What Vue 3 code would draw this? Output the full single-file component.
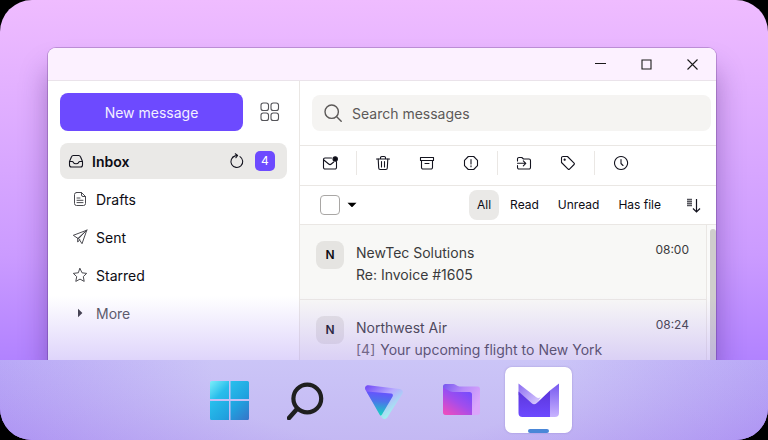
<script setup>
import { ref } from 'vue'

const query = ref('')
const allChecked = ref(false)
const activeFilter = ref('All')

const windowButtons = [
  { label: 'Minimize', path: 'M3 7.500h11' },
  { label: 'Maximize', path: 'M4 4h9v9H4z' },
  { label: 'Close', path: 'M3.500 3.500l10 10M13.500 3.500l-10 10' },
]

const folders = [
  {
    name: 'Drafts',
    paths: ['M4.500 1.500h5l4 4v7a2 2 0 0 1-2 2h-7a2 2 0 0 1-2-2v-9a2 2 0 0 1 2-2z', 'M9.500 1.500v2.500a1.500 1.500 0 0 0 1.500 1.500h2.500', 'M5 7h3M5 9.300h6M5 11.600h6'],
  },
  {
    name: 'Sent',
    paths: ['M14.800 1.200L1.300 6.300l4.400 3zM14.800 1.200L10 14.700 6.900 9.900z', 'M5.700 9.300v3.800l1.900-2.200M14.500 1.500L6.300 9.300'],
  },
  {
    name: 'Starred',
    paths: ['M8 1.500l2 4.300 4.700.6-3.400 3.200.9 4.800L8 12.100l-4.200 2.300.9-4.800-3.400-3.200 4.700-.6z'],
  },
]

const toolGroups = [
  [
    { label: 'Mark as unread', paths: ['M9.500 3H3a1.500 1.500 0 0 0-1.500 1.500v8A1.500 1.500 0 0 0 3 14h10a1.500 1.500 0 0 0 1.500-1.500V6.500', 'M1.800 5l4.900 4a2 2 0 0 0 2.600 0l2.400-2'], dot: true },
  ],
  [
    { label: 'Delete', paths: ['M1.500 4h13M5.500 4V2.800a1.300 1.300 0 0 1 1.300-1.300h2.400a1.300 1.300 0 0 1 1.300 1.300V4', 'M3.200 4l.5 9a1.500 1.500 0 0 0 1.500 1.500h5.600a1.500 1.500 0 0 0 1.500-1.500l.5-9M6.500 6.500v5.500M9.500 6.500v5.500'] },
    { label: 'Archive', paths: ['M1.500 2.500h13v3h-13z', 'M2.500 5.500v7A1.500 1.500 0 0 0 4 14h8a1.500 1.500 0 0 0 1.500-1.500v-7M6 8.500h4'] },
    { label: 'Report spam', paths: ['M5.300 1.500h5.400l3.800 3.800v5.400l-3.800 3.800H5.300l-3.800-3.800V5.300z', 'M8 4.500v4.500M8 10.700v1'] },
  ],
  [
    { label: 'Move to folder', paths: ['M1.500 6V4A1.500 1.500 0 0 1 3 2.500h2.800l1.700 1.500H13a1.500 1.500 0 0 1 1.500 1.500V12.500A1.500 1.500 0 0 1 13 14H3a1.500 1.500 0 0 1-1.500-1.500v-2', 'M1.500 8.300h8M7.300 5.800l2.500 2.500-2.500 2.500'] },
    { label: 'Add label', paths: ['M1.500 3a1.500 1.500 0 0 1 1.500-1.500h4.500l6.600 6.600a1 1 0 0 1 0 1.400l-4.600 4.600a1 1 0 0 1-1.400 0L1.500 7.500z', 'M4.600 4.100a.6.6 0 1 0 .1 0z'] },
  ],
  [
    { label: 'Snooze', paths: ['M8 1.500a6.500 6.500 0 1 0 .1 0z', 'M8 4.500V8.500l2 2'] },
  ],
]

const filters = ['All', 'Read', 'Unread', 'Has file']

const messages = [
  { sender: 'NewTec Solutions', subject: 'Re: Invoice #1605', time: '08:00' },
  { sender: 'Northwest Air', subject: 'Your upcoming flight to New York', count: 4, time: '08:24' },
]
</script>

<template>
  <div class="screen">
    <div class="desktop">
      <div class="window">
        <header class="titlebar">
          <button v-for="b in windowButtons" :key="b.label" type="button" :aria-label="b.label">
            <svg viewBox="0 0 17 17" width="17" height="17"><path :d="b.path" /></svg>
          </button>
        </header>

        <div class="body">
          <aside class="sidebar">
            <div class="compose">
              <button class="new-message" type="button">New message</button>
              <button class="apps" type="button" aria-label="Apps">
                <svg viewBox="0 0 20 20" width="20" height="20">
                  <rect x="1" y="1" width="7.500" height="7.500" rx="2.300" />
                  <rect x="11" y="1" width="7.500" height="7.500" rx="2.300" />
                  <rect x="1" y="11" width="7.500" height="7.500" rx="2.300" />
                  <rect x="11" y="11" width="7.500" height="7.500" rx="2.300" />
                </svg>
              </button>
            </div>

            <nav class="folders">
              <div class="folder active">
                <a href="#inbox">
                  <svg class="line" viewBox="0 0 16 16" width="16" height="16">
                    <path d="M1.500 8.500l2-4.700a2 2 0 0 1 1.900-1.300h5.200a2 2 0 0 1 1.900 1.300l2 4.700v3.500a2 2 0 0 1-2 2h-9a2 2 0 0 1-2-2z" />
                    <path d="M1.500 8.500h2.700c.8 0 1 .6 1.300 1.200.4.800 1 1 2.500 1s2.100-.2 2.500-1c.3-.6.500-1.200 1.300-1.200h2.700" />
                  </svg>
                  Inbox
                </a>
                <button class="refresh" type="button" aria-label="Refresh">
                  <svg class="line" viewBox="0 0 16 16" width="16" height="16">
                    <path d="M11 3.600a5.900 5.900 0 1 1-4.800-.7l2-.4" /><path d="M6.300.8l2.300 1.700L6.900 4.700" />
                  </svg>
                </button>
                <span class="badge">4</span>
              </div>
              <a v-for="f in folders" :key="f.name" class="folder" :href="'#' + f.name.toLowerCase()">
                <svg class="line soft" viewBox="0 0 16 16" width="16" height="16">
                  <path v-for="p in f.paths" :key="p" :d="p" />
                </svg>
                {{ f.name }}
              </a>
              <button class="folder more" type="button">
                <svg viewBox="0 0 16 16" width="16" height="16"><path d="M6 3.800L10.400 8 6 12.200z" /></svg>
                More
              </button>
            </nav>
          </aside>

          <main class="mail">
            <div class="search-row">
              <label class="search">
                <svg viewBox="0 0 18 18" width="18" height="18"><circle cx="7.700" cy="7.700" r="6.700" /><path d="M12.500 12.500l4.700 4.700" /></svg>
                <input v-model="query" type="search" placeholder="Search messages" aria-label="Search messages" />
              </label>
            </div>

            <div class="toolbar">
              <div v-for="(group, i) in toolGroups" :key="i" class="tools">
                <button v-for="t in group" :key="t.label" type="button" :aria-label="t.label">
                  <svg class="line" viewBox="0 0 16 16" width="16" height="16">
                    <path v-for="p in t.paths" :key="p" :d="p" />
                    <circle v-if="t.dot" class="dot" cx="13.200" cy="4" r="2.200" />
                  </svg>
                </button>
              </div>
            </div>

            <div class="filters">
              <input v-model="allChecked" type="checkbox" aria-label="Select all" />
              <button class="caret" type="button" aria-label="Selection options">
                <svg viewBox="0 0 10 6" width="10" height="6"><path d="M.5.700h9L5.600 4.700a.8.8 0 0 1-1.200 0z" /></svg>
              </button>
              <div class="tabs">
                <button v-for="f in filters" :key="f" type="button" :class="{ on: f === activeFilter }" @click="activeFilter = f">{{ f }}</button>
              </div>
              <button class="sort" type="button" aria-label="Sort">
                <svg viewBox="0 0 16 16" width="16" height="16">
                  <path class="rows" d="M2 2.500h5M2 4.500h5M2 6.500h5M2 8.500h5" />
                  <path d="M11.500 2v12.500M8 11.500l3.500 3.500 3.500-3.500" />
                </svg>
              </button>
            </div>

            <div class="list">
              <ul>
                <li v-for="m in messages" :key="m.sender">
                  <span class="avatar">{{ m.sender[0] }}</span>
                  <div class="text">
                    <div>{{ m.sender }}</div>
                    <div><span v-if="m.count" class="count">[{{ m.count }}]</span>{{ m.subject }}</div>
                  </div>
                  <time>{{ m.time }}</time>
                </li>
              </ul>
              <div class="scroll"><div class="thumb"></div></div>
            </div>
          </main>
        </div>
        <div class="fade"></div>
      </div>
    </div>

    <footer class="taskbar">
      <button type="button" aria-label="Start">
        <svg viewBox="0 0 40 40" width="40" height="40">
          <defs>
            <linearGradient id="win" x1="0" y1="0" x2="1" y2="1">
              <stop offset="0" stop-color="#7ceefa" /><stop offset=".3" stop-color="#27bdeb" />
              <stop offset=".65" stop-color="#20a2df" /><stop offset="1" stop-color="#3674c8" />
            </linearGradient>
          </defs>
          <path fill="url(#win)" d="M1.500 1h17.500v18H0V2.500A1.500 1.500 0 0 1 1.500 1zM20.500 1H37.500a1.500 1.500 0 0 1 1.500 1.500V19h-18.500zM0 21h19v19H1.500a1.500 1.500 0 0 1-1.500-1.500zM20.500 21h18.500v17.500A1.500 1.500 0 0 1 37.500 40H20.500z" />
        </svg>
      </button>
      <button type="button" aria-label="Search">
        <svg viewBox="0 0 40 40" width="40" height="40">
          <circle cx="20.300" cy="18.500" r="13.900" fill="none" stroke="#1f1f1f" stroke-width="4.200" />
          <path d="M10 29l-8 9" fill="none" stroke="#1f1f1f" stroke-width="4.500" stroke-linecap="round" />
        </svg>
      </button>
      <button type="button" aria-label="VPN">
        <svg viewBox="0 0 40 40" width="40" height="40">
          <defs>
            <linearGradient id="vpnBack" x1=".1" y1="0" x2=".8" y2=".8">
              <stop offset="0" stop-color="#7650f7" /><stop offset=".5" stop-color="#b8aaff" /><stop offset="1" stop-color="#a0f6ed" />
            </linearGradient>
            <linearGradient id="vpnFront" x1=".5" y1="0" x2=".4" y2="1">
              <stop offset="0" stop-color="#6851ff" /><stop offset=".4" stop-color="#4d73eb" /><stop offset="1" stop-color="#10d9bd" />
            </linearGradient>
          </defs>
          <path fill="url(#vpnBack)" d="M4.500 5.200l31 3.700c3 .4 4.200 2.800 2.700 5L23.500 37c-1.600 2.700-4.700 2.500-6 0L1.700 10.300C.2 7.500 1.500 4.900 4.500 5.200z" />
          <path fill="url(#vpnFront)" d="M2.500 11.500l24.500 2c1.700.1 2.500 1.400 1.600 2.900L18 34.500c-.8 1.300-1.600 1.400-2.300.2z" />
        </svg>
      </button>
      <button type="button" aria-label="Drive">
        <svg viewBox="0 0 40 40" width="40" height="40">
          <defs>
            <linearGradient id="drvBack" x1="0" y1="0" x2="1" y2=".5">
              <stop offset="0" stop-color="#7656ef" /><stop offset=".5" stop-color="#b78bf9" /><stop offset="1" stop-color="#dba6fb" />
            </linearGradient>
            <linearGradient id="drvFront" x1=".8" y1="0" x2=".1" y2="1">
              <stop offset="0" stop-color="#704cff" /><stop offset=".5" stop-color="#a34dec" /><stop offset="1" stop-color="#ef4dbd" />
            </linearGradient>
          </defs>
          <path fill="url(#drvBack)" d="M4.500 4h8c2.500 0 3.300 2.500 6 2.500h18A2.500 2.500 0 0 1 39 9v23.500a2.500 2.500 0 0 1-2.500 2.500H5a3 3 0 0 1-3-3V6.500A2.500 2.500 0 0 1 4.500 4z" />
          <path fill="url(#drvFront)" d="M2 7.500l6.500 3.600c1.500.9 2.500.9 4.500.9h15.500a2.500 2.500 0 0 1 2.500 2.500V35H5a3 3 0 0 1-3-3z" />
        </svg>
      </button>
      <button class="current" type="button" aria-label="Mail">
        <svg viewBox="0 0 42 42" width="42" height="42">
          <defs>
            <linearGradient id="mailSide" x1="0" y1="0" x2="0" y2="1">
              <stop offset="0" stop-color="#7658ef" /><stop offset="1" stop-color="#c8b3ff" />
            </linearGradient>
            <linearGradient id="mailFlap" x1="0" y1="0" x2="1" y2="1">
              <stop offset="0" stop-color="#8c6df0" /><stop offset="1" stop-color="#e1d5ff" />
            </linearGradient>
            <linearGradient id="mailFront" x1=".5" y1="0" x2=".5" y2="1">
              <stop offset="0" stop-color="#5c35db" /><stop offset="1" stop-color="#6d4aff" />
            </linearGradient>
          </defs>
          <path fill="url(#mailSide)" d="M32 11.500l9-7V34a4 4 0 0 1-4 4h-5z" />
          <path fill="url(#mailFlap)" d="M.500 4.500L18 18.100a4 4 0 0 0 4.800 0L17.500 27 .500 16z" />
          <path fill="url(#mailFront)" d="M.500 12.500L13.500 24a4 4 0 0 0 5.300 0L32 11.500V38H4.500a4 4 0 0 1-4-4z" />
        </svg>
      </button>
    </footer>
  </div>
</template>

<style>
body {
  margin: 0;
  background: #000;
}
</style>

<style scoped>
.screen {
  display: flex;
  flex-direction: column;
  height: 100vh;
  overflow: hidden;
  border-radius: 32px;
  font-family: Inter, "Liberation Sans", sans-serif;
  font-size: 14px;
  color: #0c0c14;
  background: linear-gradient(#efbcff, #cb9bff 58%, #b182ff 82%);
}
.screen * {
  box-sizing: border-box;
}
button {
  padding: 0;
  border: 0;
  background: none;
  font: inherit;
  color: inherit;
}
a {
  color: inherit;
  text-decoration: none;
}
svg {
  display: block;
  flex: none;
}
.line {
  fill: none;
  stroke: #14141f;
  stroke-width: 1.1;
  stroke-linejoin: round;
  stroke-linecap: round;
}
.line.soft {
  stroke: #4a4a50;
  stroke-width: 1;
}
.line .dot {
  fill: #0c0c14;
}

.desktop {
  display: flex;
  flex: 1;
  min-height: 0;
  overflow: hidden;
  padding: 48px 52px 0 48px;
}
.window {
  position: relative;
  display: flex;
  flex-direction: column;
  flex: 1;
  min-width: 0;
  border-radius: 8px 8px 0 0;
  background: #fff;
  box-shadow: 0 0 0 1px rgba(60, 20, 90, 0.24), 0 22px 28px rgba(50, 10, 90, 0.36);
}
.fade {
  position: absolute;
  inset: auto 0 0;
  height: 64px;
  background: linear-gradient(rgba(166, 138, 244, 0), rgba(166, 138, 244, 0.36));
  pointer-events: none;
}
.titlebar {
  display: flex;
  justify-content: flex-end;
  height: 33px;
  flex: none;
  padding-right: 1px;
  border-bottom: 1px solid #eae3ea;
  border-radius: 8px 8px 0 0;
  background: #fcf1ff;
}
.titlebar button {
  display: grid;
  place-items: center;
  width: 46px;
}
.titlebar svg {
  fill: none;
  stroke: #1a1a1a;
  stroke-width: 1.1;
}
.body {
  display: flex;
  flex: 1;
  min-height: 0;
}

.sidebar {
  flex: none;
  width: 252px;
  padding: 12px;
  border-right: 1px solid #eae7e4;
}
.compose {
  display: flex;
  align-items: center;
  gap: 17px;
}
.new-message {
  flex: 1;
  height: 38px;
  border-radius: 8px;
  background: #6d4aff;
  color: #f3efff;
}
.apps {
  margin-right: 7px;
}
.apps svg {
  fill: none;
  stroke: #55555a;
  stroke-width: 1.1;
}
.folders {
  display: flex;
  flex-direction: column;
  gap: 2px;
  margin-top: 12px;
}
.folder {
  display: flex;
  align-items: center;
  gap: 8px;
  height: 36px;
  padding: 0 12px;
}
.folder.active {
  padding: 0 12px 0 8px;
  border-radius: 8px;
  background: #eae9e7;
  font-weight: 600;
}
.folder.active a {
  display: flex;
  flex: 1;
  align-items: center;
  gap: 8px;
}
.badge {
  width: 20px;
  margin-left: 2px;
  border-radius: 5px;
  background: #6d4aff;
  color: #fff;
  font-size: 12px;
  font-weight: 400;
  line-height: 20px;
  text-align: center;
}
.more {
  color: #55555c;
}
.more svg {
  fill: #3c3c44;
}

.mail {
  display: flex;
  flex: 1;
  flex-direction: column;
  min-width: 0;
}
.search-row {
  padding: 14px 5px 14px 12px;
  border-bottom: 1px solid #eae7e4;
}
.search {
  display: flex;
  align-items: center;
  gap: 10px;
  height: 36px;
  padding: 0 12px;
  border-radius: 8px;
  background: #f5f4f2;
}
.search svg {
  fill: none;
  stroke: #5c5958;
  stroke-width: 1.4;
  stroke-linecap: round;
}
.search input {
  flex: 1;
  min-width: 0;
  padding: 0;
  border: 0;
  outline: 0;
  background: none;
  font: inherit;
  color: inherit;
}
.search input::placeholder {
  color: #5c5958;
  opacity: 1;
}
.toolbar {
  display: flex;
  align-items: center;
  flex: none;
  height: 40px;
  padding: 0 4px 5px;
  border-bottom: 1px solid #eae7e4;
}
.tools {
  display: flex;
  gap: 4px;
  padding: 0 6px;
}
.tools + .tools {
  border-left: 1px solid #eae7e4;
}
.tools button {
  display: grid;
  place-items: center;
  width: 40px;
  height: 24px;
}
.filters {
  display: flex;
  align-items: center;
  flex: none;
  height: 39px;
  padding: 0 15px 0 20px;
  border-bottom: 1px solid #eae7e4;
}
.filters input {
  appearance: none;
  width: 20px;
  height: 20px;
  margin: 0;
  border: 1px solid #a9a7a5;
  border-radius: 4px;
  background: #fff;
}
.filters input:checked {
  background: #6d4aff;
}
.caret {
  margin-left: 7px;
}
.tabs {
  display: flex;
  flex: 1;
  justify-content: flex-end;
  gap: 3px;
  font-size: 12px;
}
.tabs button {
  height: 30px;
  padding: 0 8px 2px;
  border-radius: 8px;
}
.tabs .on {
  background: #eae9e7;
}
.sort {
  margin-left: 16px;
}
.sort svg {
  fill: none;
  stroke: #14141f;
  stroke-width: 1.2;
}
.sort .rows {
  stroke: #55555c;
  stroke-width: 1.4;
}

.list {
  display: flex;
  flex: 1;
  min-height: 0;
  overflow: hidden;
}
ul {
  flex: 1;
  min-width: 0;
  margin: 0;
  padding: 0;
  list-style: none;
  border-right: 1px solid #eae7e4;
  background: #f8f8f6;
}
li {
  display: flex;
  align-items: flex-start;
  gap: 12px;
  height: 75px;
  padding: 16px 17px 0 16px;
  border-bottom: 1px solid #eae7e4;
  color: #3a3a3c;
  line-height: 22px;
}
.avatar {
  width: 28px;
  border-radius: 8px;
  background: #e5e4e1;
  color: #0c0c14;
  font-size: 12px;
  font-weight: 600;
  line-height: 28px;
  text-align: center;
}
.text {
  flex: 1;
  min-width: 0;
  padding-top: 1px;
  white-space: nowrap;
}
.count {
  margin-right: 5px;
  color: #5c5958;
}
time {
  padding-top: 1px;
  font-size: 12px;
  line-height: 16px;
}
.scroll {
  width: 9px;
  padding: 4px 0 0 3px;
  background: #fafaf9;
}
.thumb {
  height: 100%;
  border-radius: 3px 3px 0 0;
  background: #cfcdcc;
}

.taskbar {
  display: flex;
  flex: none;
  align-items: center;
  justify-content: center;
  gap: 37px;
  height: 80px;
  padding-left: 14px;
  background:
    linear-gradient(rgba(170, 140, 230, 0), rgba(170, 140, 230, 0.22)),
    radial-gradient(ellipse 56% 230% at 50% 10%, rgba(203, 197, 247, 1) 40%, rgba(203, 197, 247, 0) 100%),
    linear-gradient(#b5a2f6, #ae94f7);
}
.taskbar .current {
  position: relative;
  display: grid;
  place-items: center;
  width: 67px;
  height: 66px;
  margin-left: -13px;
  border-radius: 7px;
  background: #fff;
  box-shadow: 0 0 2px rgba(80, 60, 150, 0.35);
}
.current::after {
  content: "";
  position: absolute;
  bottom: 0;
  left: 23px;
  width: 21px;
  height: 4px;
  border-radius: 2px;
  background: #4a87d8;
}
</style>
